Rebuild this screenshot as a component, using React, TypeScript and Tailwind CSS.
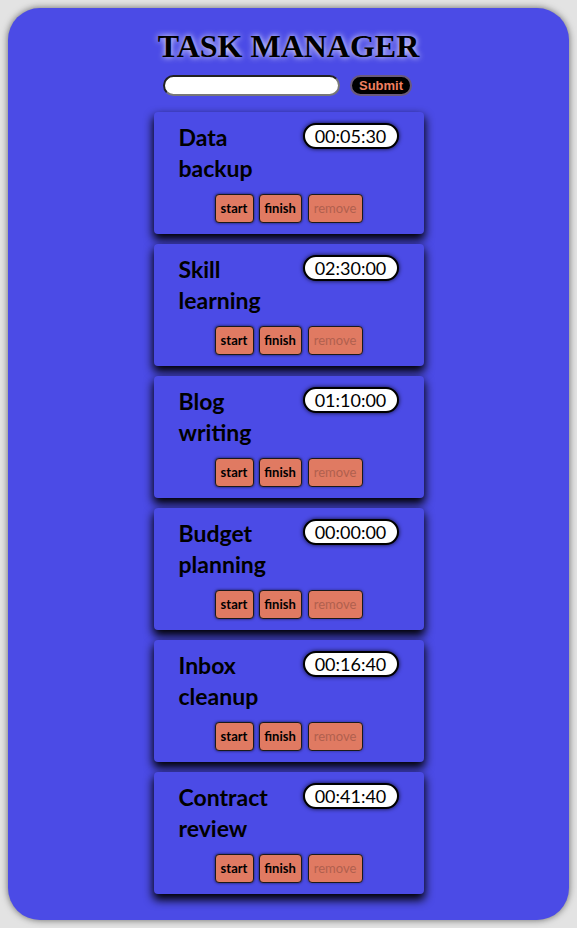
import { useState } from 'react'

interface Task {
  name: string
  time: string
}

const TASKS: Task[] = [
  { name: 'Data backup', time: '00:05:30' },
  { name: 'Skill learning', time: '02:30:00' },
  { name: 'Blog writing', time: '01:10:00' },
  { name: 'Budget planning', time: '00:00:00' },
  { name: 'Inbox cleanup', time: '00:16:40' },
  { name: 'Contract review', time: '00:41:40' },
]

function TaskCard({ task }: { task: Task }) {
  return (
    <div className="w-[270px] h-[122px] bg-[#4b4be6] rounded-[4px] shadow-[0_5px_10px_1px_#000] px-[25px] flex flex-col">
      <div className="flex justify-between items-start">
        <h2 className="mt-[10px] w-[110px] text-[23px] leading-[31px] font-bold text-black font-['Lato',sans-serif]">
          {task.name}
        </h2>
        <span className="mt-[11px] w-[96px] h-[26px] flex items-center justify-center bg-white border-2 border-black rounded-full text-[18px] text-black font-['Lato',sans-serif] shadow-[0_0_4px_rgba(0,0,0,0.8)]">
          {task.time}
        </span>
      </div>
      <div className="mt-auto mb-[11px] flex justify-center gap-[5px] font-['Lato',sans-serif]">
        <button className="w-[39px] h-[29px] bg-[#e07a62] border border-[#1a1a1a] rounded-[4px] text-[13px] font-bold text-black shadow-[0_0_3px_rgba(0,0,0,0.7)]">
          start
        </button>
        <button className="w-[43px] h-[29px] bg-[#e07a62] border border-[#1a1a1a] rounded-[4px] text-[13px] font-bold text-black shadow-[0_0_3px_rgba(0,0,0,0.7)]">
          finish
        </button>
        <button disabled className="ml-px w-[55px] h-[29px] bg-[#e07a62] border border-[#1a1a1a] rounded-[4px] text-[13px] text-[#b0604e] shadow-[0_0_3px_rgba(0,0,0,0.4)]">
          remove
        </button>
      </div>
    </div>
  )
}

export default function App() {
  const [text, setText] = useState('')

  return (
    <div className="min-h-[928px] bg-[#e3e3e3] p-[8px]">
      <div className="h-[912px] bg-[#4b4be6] rounded-[32px] shadow-[0_0_7px_rgba(0,0,0,0.55)] pt-[20px] flex flex-col items-center">
        <h1 className="text-[32px] leading-[37px] font-bold text-black font-['Liberation_Serif',serif] [text-shadow:0_0_6px_#fff]">
          TASK MANAGER
        </h1>
        <div className="mt-[10px] flex items-center gap-[10px] ml-[-2px]">
          <input
            value={text}
            onChange={e => setText(e.target.value)}
            className="w-[177px] h-[21px] bg-white rounded-full border-2 border-t-[#222] border-l-[#222] border-b-[#777] border-r-[#777] px-2 text-sm outline-none"
          />
          <button className="w-[62px] h-[21px] bg-black rounded-full border-2 border-[#6a5a7a] text-[13px] font-bold text-[#f08060] font-['Liberation_Sans',sans-serif] leading-none">
            Submit
          </button>
        </div>
        <div className="mt-[16px] flex flex-col gap-[10px]">
          {TASKS.map(t => (
            <TaskCard key={t.name} task={t} />
          ))}
        </div>
      </div>
    </div>
  )
}
